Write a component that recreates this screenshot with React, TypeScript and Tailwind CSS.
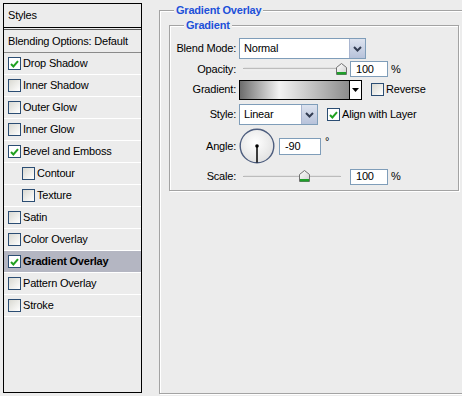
import React from 'react';

// Layer Style dialog: left list of effects, right "Gradient Overlay" settings

type Effect = { label: string; checked?: boolean; sub?: boolean; active?: boolean };

const effects: Effect[] = [
  { label: 'Drop Shadow', checked: true },
  { label: 'Inner Shadow' },
  { label: 'Outer Glow' },
  { label: 'Inner Glow' },
  { label: 'Bevel and Emboss', checked: true },
  { label: 'Contour', sub: true },
  { label: 'Texture', sub: true },
  { label: 'Satin' },
  { label: 'Color Overlay' },
  { label: 'Gradient Overlay', checked: true, active: true },
  { label: 'Pattern Overlay' },
  { label: 'Stroke' },
];

function CheckBox({ checked }: { checked?: boolean }) {
  return (
    <span
      className={
        'flex w-[13px] h-[13px] shrink-0 items-center justify-center border border-[#2b4d73] ' +
        (checked ? 'bg-white' : 'bg-gradient-to-br from-[#d9d9d2] to-white')
      }
    >
      {checked && (
        <svg width="9" height="8" viewBox="0 0 9 8">
          <path d="M1 4 L3.4 6.5 L8 1.2" fill="none" stroke="#21a121" strokeWidth="2" />
        </svg>
      )}
    </span>
  );
}

function Chevron() {
  return (
    <span className="flex w-[16px] h-full items-center justify-center bg-gradient-to-b from-[#dde3ef] to-[#b7c2da] border-l border-[#aab6d0]">
      <svg width="9" height="6" viewBox="0 0 9 6">
        <path d="M1 1 L4.5 4.5 L8 1" fill="none" stroke="#333d52" strokeWidth="2" />
      </svg>
    </span>
  );
}

function Select({ value, width }: { value: string; width: string }) {
  return (
    <div className={'flex h-[21px] border border-[#7f9db9] bg-white ' + width}>
      <span className="flex-1 pl-[4px] leading-[19px]">{value}</span>
      <Chevron />
    </div>
  );
}

function Thumb() {
  return (
    <svg width="11" height="12" viewBox="0 0 11 12">
      <defs>
        <linearGradient id="th" x1="0" y1="0" x2="1" y2="1">
          <stop offset="0" stopColor="#ffffff" />
          <stop offset="1" stopColor="#cfcfcf" />
        </linearGradient>
      </defs>
      <path d="M5.5 0.5 L10.5 4.5 V11.5 H0.5 V4.5 Z" fill="url(#th)" stroke="#707070" />
      <rect x="1" y="9" width="9" height="2.5" fill="#1f9f2a" />
    </svg>
  );
}

function Slider({ pct, thumbTop }: { pct: number; thumbTop: string }) {
  return (
    <div className="relative w-[106px] h-full shrink-0">
      <div className="absolute left-[4px] right-[4px] top-1/2 -translate-y-1/2 h-[3px] rounded-full border-t border-[#9c9c9c] border-b border-b-white bg-[#dcdcdc]" />
      <div className={'absolute ' + thumbTop} style={{ left: 4 + pct * 98 - 5 }}>
        <Thumb />
      </div>
    </div>
  );
}

function Field({ value, width, height }: { value: string; width: string; height: string }) {
  return (
    <div className={'border border-[#7f9db9] bg-white pl-[5px] flex items-center ' + width + ' ' + height}>
      {value}
    </div>
  );
}

function Dial() {
  return (
    <svg width="36" height="36" viewBox="0 0 36 36" className="shrink-0">
      <defs>
        <radialGradient id="dl" cx="0.45" cy="0.4" r="0.6">
          <stop offset="0" stopColor="#ffffff" />
          <stop offset="1" stopColor="#e2e2e2" />
        </radialGradient>
      </defs>
      <circle cx="18" cy="18" r="16.8" fill="url(#dl)" stroke="#4d5d7e" strokeWidth="1.4" />
      <line x1="18" y1="18" x2="18" y2="34.5" stroke="#000" strokeWidth="1.5" />
      <circle cx="18" cy="18" r="1.8" fill="#000" />
    </svg>
  );
}

function Row({ label, className, children }: { label: string; className: string; children: React.ReactNode }) {
  return (
    <div className={'flex items-center ' + className}>
      <span className="w-[66px] mr-[3px] shrink-0 text-right">{label}</span>
      {children}
    </div>
  );
}

export default function App() {
  return (
    <div className="w-[462px] h-[396px] overflow-hidden bg-[#ececec] flex items-start whitespace-nowrap text-[11px] text-black tracking-[-0.2px] font-['Liberation_Sans',Arial,sans-serif]">
      {/* Styles list */}
      <div className="ml-[3px] mt-[3px] w-[139px] h-[390px] shrink-0 border border-black flex flex-col">
        <div className="h-[24px] border-b border-black pl-[4px] flex items-center">Styles</div>
        <div className="mt-[1px] h-[24px] border-t border-[#5a5a5a] border-b border-b-[#8a8a8a] pl-[4px] flex items-center">
          Blending Options: Default
        </div>
        {effects.map(e => (
          <div
            key={e.label}
            className={
              'h-[22px] border-b border-white flex items-center gap-[2px] ' +
              (e.sub ? 'pl-[18px] ' : 'pl-[4px] ') +
              (e.active ? 'bg-[#b4b6c2] font-bold' : '')
            }
          >
            <CheckBox checked={e.checked} />
            <span>{e.label}</span>
          </div>
        ))}
      </div>

      {/* Gradient Overlay group */}
      <div className="relative ml-[17px] mt-[10px] w-[320px] h-[384px] shrink-0 border border-[#a3a3a3] shadow-[inset_1px_1px_0_#fff,1px_1px_0_#fff]">
        <span className="absolute left-[14px] -top-[8px] px-[2px] bg-[#ececec] leading-[14px] font-bold text-[#1c50d9]">
          Gradient Overlay
        </span>

        <div className="relative ml-[9px] mt-[14px] w-[290px] h-[166px] border border-[#a3a3a3] shadow-[inset_1px_1px_0_#fff,1px_1px_0_#fff] pt-[12px]">
          <span className="absolute left-[14px] -top-[8px] px-[2px] bg-[#ececec] leading-[14px] font-bold text-[#1c50d9]">
            Gradient
          </span>

          <Row label="Blend Mode:" className="h-[21px]">
            <Select value="Normal" width="w-[127px]" />
          </Row>

          <Row label="Opacity:" className="h-[20px]">
            <Slider pct={1} thumbTop="top-[4px]" />
            <div className="ml-[5px]">
              <Field value="100" width="w-[38px]" height="h-[16px]" />
            </div>
            <span className="ml-[3px]">%</span>
          </Row>

          <Row label="Gradient:" className="h-[21px]">
            <div className="flex w-[123px] h-[20px] border border-black">
              <div className="flex-1 bg-[linear-gradient(to_right,#6c6c6c,#f3f3f3_36%,#8c8c8c)]" />
              <div className="w-[12px] border-l border-black bg-white flex items-center justify-center">
                <svg width="7" height="4" viewBox="0 0 7 4">
                  <path d="M0 0 H7 L3.5 4 Z" fill="#000" />
                </svg>
              </div>
            </div>
            <div className="ml-[9px] flex items-center gap-[2px]">
              <CheckBox />
              <span>Reverse</span>
            </div>
          </Row>

          <Row label="Style:" className="mt-[4px] h-[21px]">
            <Select value="Linear" width="w-[79px]" />
            <div className="ml-[9px] flex items-center gap-[2px]">
              <CheckBox checked />
              <span>Align with Layer</span>
            </div>
          </Row>

          <Row label="Angle:" className="mt-[3px] h-[36px]">
            <Dial />
            <div className="ml-[4px]">
              <Field value="-90" width="w-[42px]" height="h-[17px]" />
            </div>
            <span className="ml-[4px] relative -top-[5px]">°</span>
          </Row>

          <Row label="Scale:" className="mt-[4px] h-[17px]">
            <Slider pct={0.62} thumbTop="top-[2px]" />
            <div className="ml-[5px]">
              <Field value="100" width="w-[38px]" height="h-[16px]" />
            </div>
            <span className="ml-[3px]">%</span>
          </Row>
        </div>
      </div>
    </div>
  );
}
